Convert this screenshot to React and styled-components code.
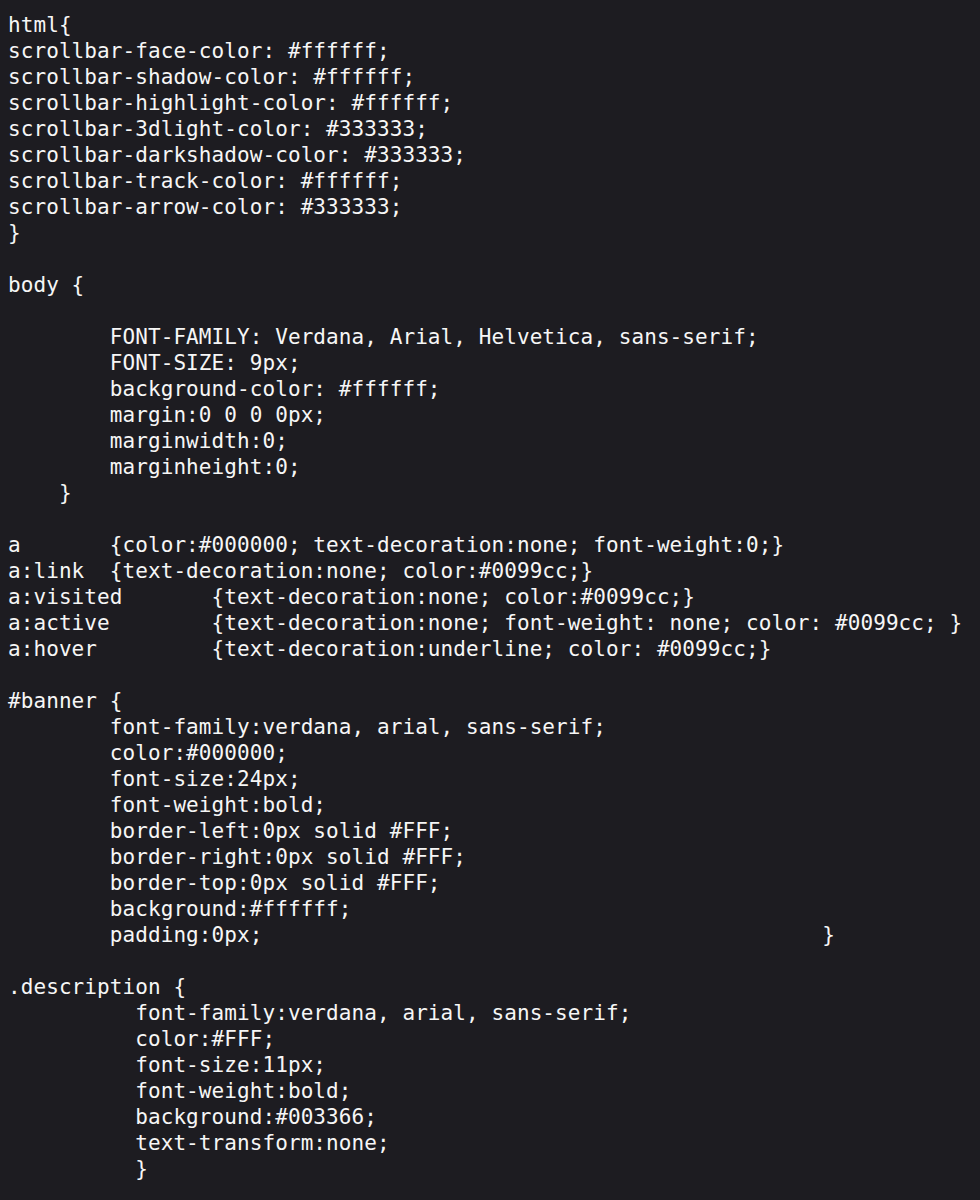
import React from "react";
import styled, { createGlobalStyle } from "styled-components";

const GlobalStyle = createGlobalStyle`
  html, body {
    margin: 0;
    padding: 0;
    background: #1d1c21;
  }
  body {
    min-height: 1200px;
  }
`;

const Editor = styled.main`
  box-sizing: border-box;
  min-height: 1200px;
  background: #1d1c21;
  padding: 12px 0 0 8px;
`;

const Code = styled.pre`
  margin: 0;
  font-family: "DejaVu Sans Mono", "Liberation Mono", monospace;
  font-size: 21px;
  letter-spacing: 0.08px;
  line-height: 26px;
  color: #f6f6f6;
  white-space: pre;
  tab-size: 8;
`;

const Line = styled.div`
  height: 26px;
`;

const SOURCE = [
  "html{",
  "scrollbar-face-color: #ffffff;",
  "scrollbar-shadow-color: #ffffff;",
  "scrollbar-highlight-color: #ffffff;",
  "scrollbar-3dlight-color: #333333;",
  "scrollbar-darkshadow-color: #333333;",
  "scrollbar-track-color: #ffffff;",
  "scrollbar-arrow-color: #333333;",
  "}",
  "",
  "body {",
  "",
  "        FONT-FAMILY: Verdana, Arial, Helvetica, sans-serif;",
  "        FONT-SIZE: 9px;",
  "        background-color: #ffffff;",
  "        margin:0 0 0 0px;",
  "        marginwidth:0;",
  "        marginheight:0;",
  "    }",
  "",
  "a       {color:#000000; text-decoration:none; font-weight:0;}",
  "a:link  {text-decoration:none; color:#0099cc;}",
  "a:visited       {text-decoration:none; color:#0099cc;}",
  "a:active        {text-decoration:none; font-weight: none; color: #0099cc; }",
  "a:hover         {text-decoration:underline; color: #0099cc;}",
  "",
  "#banner {",
  "        font-family:verdana, arial, sans-serif;",
  "        color:#000000;",
  "        font-size:24px;",
  "        font-weight:bold;",
  "        border-left:0px solid #FFF;",
  "        border-right:0px solid #FFF;",
  "        border-top:0px solid #FFF;",
  "        background:#ffffff;",
  "        padding:0px;                                            }",
  "",
  ".description {",
  "          font-family:verdana, arial, sans-serif;",
  "          color:#FFF;",
  "          font-size:11px;",
  "          font-weight:bold;",
  "          background:#003366;",
  "          text-transform:none;",
  "          }",
];

export default function App() {
  return (
    <>
      <GlobalStyle />
      <Editor>
        <Code>
          {SOURCE.map((text, i) => (
            <Line key={i}>{text}</Line>
          ))}
        </Code>
      </Editor>
    </>
  );
}
